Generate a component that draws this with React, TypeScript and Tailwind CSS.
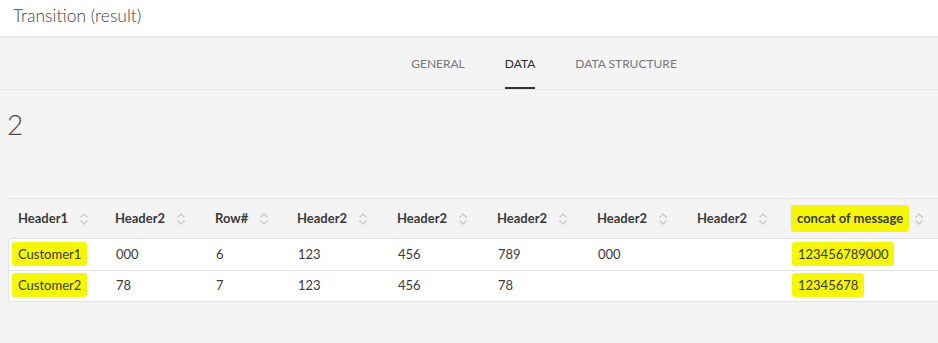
import React from 'react';

const SortIcon: React.FC = () => (
  <svg width="10" height="14" viewBox="0 0 10 14" fill="none" className="shrink-0">
    <path d="M1.5 5.5 L5 2 L8.5 5.5" stroke="#c9c9c9" strokeWidth="1.3" />
    <path d="M1.5 8.5 L5 12 L8.5 8.5" stroke="#c9c9c9" strokeWidth="1.3" />
  </svg>
);

const columns = [
  { label: 'Header1', w: 'w-[97px]' },
  { label: 'Header2', w: 'w-[100px]' },
  { label: 'Row#', w: 'w-[82px]' },
  { label: 'Header2', w: 'w-[100px]' },
  { label: 'Header2', w: 'w-[100px]' },
  { label: 'Header2', w: 'w-[100px]' },
  { label: 'Header2', w: 'w-[100px]' },
  { label: 'Header2', w: 'w-[100px]' },
  { label: 'concat of message', w: 'w-[150px]' },
];

const rows = [
  ['Customer1', '000', '6', '123', '456', '789', '000', '', '123456789000'],
  ['Customer2', '78', '7', '123', '456', '78', '', '', '12345678'],
];

const Highlight: React.FC<{ children: React.ReactNode }> = ({ children }) => (
  <span className="bg-[#f6f60a] -mx-[6px] px-[6px] py-[4px] rounded-[3px] [box-decoration-break:clone]">
    {children}
  </span>
);

export default function App() {
  return (
    <div className="w-[938px] h-[343px] overflow-hidden bg-[#f4f4f4] font-['Lato','Liberation_Sans',sans-serif] text-[#2c2c2c]">
      {/* title bar */}
      <div className="h-[38px] bg-white border-b-2 border-[#e6e6e6] px-[13px] pt-[3px]">
        <h1 className="text-[17.5px] font-light text-[#444] leading-[26px]">Transition (result)</h1>
      </div>

      {/* tabs */}
      <div className="h-[52px] border-b border-[#e3e3e3] flex justify-center items-stretch pl-[150px]">
        <div className="flex gap-[40px] text-[12px]">
          <div className="flex items-center text-[#777]">GENERAL</div>
          <div className="flex items-center relative text-[#2c2c2c]">
            DATA
            <span className="absolute left-0 right-0 bottom-0 h-[2px] bg-[#323232]" />
          </div>
          <div className="flex items-center text-[#777]">DATA STRUCTURE</div>
        </div>
      </div>

      {/* count */}
      <div className="pl-[7px] pt-[20px] h-[108px]">
        <span className="text-[28px] font-light text-[#4b4b4b] leading-none">2</span>
      </div>

      {/* table */}
      <div className="ml-[8px] border-t border-[#e6e6e6]">
        <div className="flex h-[39px] items-center">
          {columns.map((c, i) => (
            <div key={i} className={`${c.w} pl-[10px] flex items-center gap-[11px] text-[13px] font-bold text-[#3a3a3a]`}>
              {c.label === 'concat of message' ? <Highlight>{c.label}</Highlight> : <span>{c.label}</span>}
              <SortIcon />
            </div>
          ))}
        </div>
        <div className="bg-white border border-r-0 border-[#e3e3e3] rounded-l-[4px]">
          {rows.map((r, ri) => (
            <div key={ri} className={`flex h-[31px] items-center text-[13px] text-[#3a3a3a] ${ri > 0 ? 'border-t border-[#e3e3e3]' : ''}`}>
              {r.map((v, ci) => (
                <div key={ci} className={`${columns[ci].w} ${ci === 0 ? 'pl-[9px]' : 'pl-[10px]'}`}>
                  {(ci === 0 || ci === 8) && v ? <Highlight>{v}</Highlight> : v}
                </div>
              ))}
            </div>
          ))}
        </div>
      </div>
    </div>
  );
}
